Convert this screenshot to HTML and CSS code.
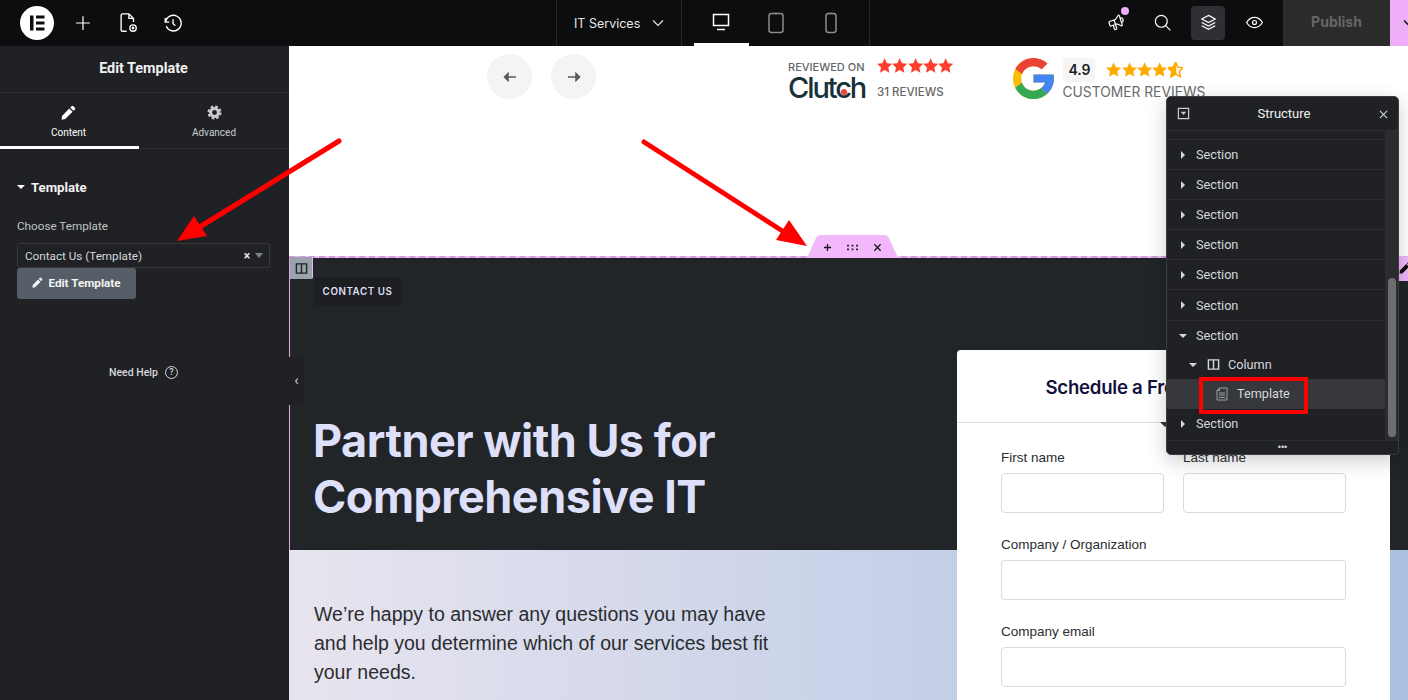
FILE: index.html
```html
<!DOCTYPE html>
<html lang="en">
<head>
<meta charset="utf-8">
<title>Edit Template</title>
<link rel="stylesheet" href="styles.css">
</head>
<body>
<svg class="defs" width="0" height="0">
  <defs>
    <symbol id="star" viewBox="1 1 22 22"><path d="M12 1.5l3.3 6.9 7.5 1-5.5 5.2 1.4 7.5L12 18.4l-6.7 3.7 1.4-7.5L1.200 9.400l7.500-1z"/></symbol>
    <symbol id="pencil" viewBox="0 0 16 16"><path d="M11.300 1.200a1.300 1.300 0 0 1 1.800 0l1.700 1.700a1.300 1.300 0 0 1 0 1.800l-1.500 1.500-3.500-3.500zM8.800 3.700l3.500 3.500-7.800 7.800L.6 15.600l.5-4z"/></symbol>
    <symbol id="columns" viewBox="0 0 14 14"><path d="M1.500 2h11v10h-11zM7 2v10" fill="none" stroke="currentColor" stroke-width="1.500"/></symbol>
  </defs>
</svg>

<header class="topbar">
  <div class="topbar-left">
    <svg class="logo" viewBox="0 0 34 34"><circle cx="17" cy="17" r="17" fill="#fff"/><path d="M10 9.500h3.500v15H10zM16 9.500h8.500v3H16zM16 15.500h8.500v3H16zM16 21.500h8.500v3H16z" fill="#0c0d0e"/></svg>
    <svg class="tool tool-plus" viewBox="0 0 24 24"><path d="M12 4.500v15M4.500 12h15"/></svg>
    <svg class="tool tool-doc" viewBox="0 0 24 24"><path d="M10.500 21H6a1.500 1.500 0 0 1-1.500-1.500v-16A1.500 1.500 0 0 1 6 2h7l5 5v4M13 2v5h5"/><circle cx="17.500" cy="17.500" r="3.500"/><circle cx="17.500" cy="17.500" r=".8"/></svg>
    <svg class="tool tool-history" viewBox="0 0 24 24"><path d="M12 8v4.500l2.500 2.500M4 11a8.500 8.500 0 1 1 .6 4.500M3.500 6.500V11H8"/></svg>
  </div>
  <div class="topbar-center">
    <div class="page-select"><span>IT Services</span><svg class="chev" viewBox="0 0 12 12"><path d="M1 3.500l5 5 5-5"/></svg></div>
    <div class="devices">
      <div class="device device-active"><svg viewBox="0 0 20 20"><path d="M2.500 2.500h15v11h-15zM6 17.500h8"/></svg></div>
      <div class="device"><svg viewBox="0 0 20 22"><rect x="3" y="1.500" width="14" height="19" rx="2.500"/><path d="M8.500 1.500h3"/></svg></div>
      <div class="device"><svg viewBox="0 0 20 22"><rect x="5" y="1.500" width="10" height="19" rx="2.500"/><path d="M8.500 1.500h3"/></svg></div>
    </div>
  </div>
  <div class="topbar-right">
    <div class="icon-btn icon-btn-notify"><svg viewBox="0 0 24 24"><g transform="rotate(-18 12 12)"><path d="M18 8a3 3 0 0 1 0 6M10 8v11a1 1 0 0 1-1 1H8a1 1 0 0 1-1-1v-5M12 8l4.500-3.800a.9.9 0 0 1 1.500.7v12.200a.9.9 0 0 1-1.500.7L12 14H4a1 1 0 0 1-1-1V9a1 1 0 0 1 1-1z"/></g></svg><i class="dot"></i></div>
    <div class="icon-btn"><svg viewBox="0 0 24 24"><circle cx="10.500" cy="10.500" r="7.500"/><path d="M16 16l6 6"/></svg></div>
    <div class="icon-btn icon-btn-active"><svg viewBox="0 0 24 24"><path d="M12 3l8.500 4.500L12 12 3.500 7.500zM3.500 12l8.500 4.500 8.500-4.500M3.500 16l8.500 4.500 8.500-4.500"/></svg></div>
    <div class="icon-btn"><svg viewBox="0 0 24 24"><path d="M2 12c2.600-4.300 6-6.500 10-6.500s7.400 2.200 10 6.500c-2.600 4.300-6 6.500-10 6.500S4.600 16.300 2 12z"/><circle cx="12" cy="12" r="2.500"/></svg></div>
    <div class="publish">Publish</div>
    <div class="publish-more"><svg viewBox="0 0 12 12"><path d="M1 3.500l5 5 5-5"/></svg></div>
  </div>
</header>

<div class="workspace">
  <aside class="sidebar">
    <div class="side-title">Edit Template</div>
    <div class="tabs">
      <div class="tab tab-active">
        <svg class="tab-icon"><use href="#pencil"/></svg>
        <span>Content</span>
      </div>
      <div class="tab">
        <svg class="tab-icon" viewBox="0 0 16 16"><circle cx="8" cy="8" r="4.200" fill="none" stroke="currentColor" stroke-width="3.200"/><circle cx="8" cy="8" r="6.300" fill="none" stroke="currentColor" stroke-width="2.400" stroke-dasharray="2.800 2.150"/></svg>
        <span>Advanced</span>
      </div>
    </div>
    <div class="side-body">
      <div class="side-heading"><i class="caret-down"></i><span>Template</span></div>
      <div class="side-label">Choose Template</div>
      <div class="select">
        <span class="select-value">Contact Us (Template)</span>
        <span class="select-clear">×</span>
        <i class="select-caret"></i>
      </div>
      <div class="edit-btn"><svg class="edit-pencil"><use href="#pencil"/></svg><span>Edit Template</span></div>
      <div class="need-help"><span>Need Help</span><span class="help-icon">?</span></div>
    </div>
  </aside>

  <main class="canvas">
    <section class="reviews">
      <div class="nav-arrows">
        <div class="nav-btn"><svg viewBox="0 0 14 10"><path d="M13 5H3M5 1.500L1.500 5 5 8.500z"/></svg></div>
        <div class="nav-btn"><svg viewBox="0 0 14 10"><path d="M1 5h10M9 1.500L12.500 5 9 8.500z"/></svg></div>
      </div>
      <div class="clutch">
        <div class="clutch-brand">
          <div class="clutch-on">REVIEWED ON</div>
          <div class="clutch-logo">Clutch<i class="clutch-dot"></i></div>
        </div>
        <div class="clutch-rating">
          <div class="stars stars-red">
            <svg><use href="#star"/></svg><svg><use href="#star"/></svg><svg><use href="#star"/></svg><svg><use href="#star"/></svg><svg><use href="#star"/></svg>
          </div>
          <div class="clutch-count">31 REVIEWS</div>
        </div>
      </div>
      <div class="google">
        <svg class="g-logo" viewBox="4 4 40 40">
          <path fill="#FBBC05" d="M43.611 20.083H42V20H24v8h11.303c-1.649 4.657-6.08 8-11.303 8-6.627 0-12-5.373-12-12s5.373-12 12-12c3.059 0 5.842 1.154 7.961 3.039l5.657-5.657C34.046 6.053 29.268 4 24 4 12.955 4 4 12.955 4 24s8.955 20 20 20 20-8.955 20-20c0-1.341-.138-2.650-.389-3.917z"/>
          <path fill="#EA4335" d="M6.306 14.691l6.571 4.819C14.655 15.108 18.961 12 24 12c3.059 0 5.842 1.154 7.961 3.039l5.657-5.657C34.046 6.053 29.268 4 24 4 16.318 4 9.656 8.337 6.306 14.691z"/>
          <path fill="#34A853" d="M24 44c5.166 0 9.860-1.977 13.409-5.192l-6.190-5.238C29.211 35.091 26.715 36 24 36c-5.202 0-9.619-3.317-11.283-7.946l-6.522 5.025C9.505 39.556 16.227 44 24 44z"/>
          <path fill="#4285F4" d="M43.611 20.083H42V20H24v8h11.303c-.792 2.237-2.231 4.166-4.087 5.571l6.193 5.236C36.971 39.205 44 34 44 24c0-1.341-.138-2.650-.389-3.917z"/>
        </svg>
        <div class="google-info">
          <div class="google-top">
            <span class="score">4.9</span>
            <div class="stars stars-orange">
              <svg><use href="#star"/></svg><svg><use href="#star"/></svg><svg><use href="#star"/></svg><svg><use href="#star"/></svg>
              <svg class="star-half" viewBox="1 1 22 22"><path d="M12 1.500l3.300 6.900 7.500 1-5.500 5.200 1.400 7.500L12 18.400l-6.700 3.700 1.400-7.500L1.200 9.400l7.500-1z" fill="none" stroke-width="2.200"/><path d="M12 1.500v16.900l-6.700 3.700 1.400-7.500L1.200 9.400l7.500-1z"/></svg>
            </div>
          </div>
          <div class="google-label">CUSTOMER REVIEWS</div>
        </div>
      </div>
    </section>

    <section class="contact-dark">
      <div class="add-handle">
        <svg viewBox="0 0 10 10"><path d="M5 1v8M1 5h8"/></svg>
        <svg class="handle-grid" viewBox="0 0 14 10"><path d="M1 2h2v2H1zM6 2h2v2H6zM11 2h2v2h-2zM1 6h2v2H1zM6 6h2v2H6zM11 6h2v2h-2z"/></svg>
        <svg viewBox="0 0 10 10"><path d="M1.500 1.500l7 7M8.500 1.500l-7 7"/></svg>
      </div>
      <div class="col-handle"><svg><use href="#columns"/></svg></div>
      <div class="edit-handle"><svg><use href="#pencil"/></svg></div>
      <div class="chip">CONTACT US</div>
      <h1 class="headline">Partner with Us for<br>Comprehensive IT</h1>
    </section>

    <section class="contact-light">
      <p class="lede">We’re happy to answer any questions you may have<br>and help you determine which of our services best fit<br>your needs.</p>
    </section>

    <div class="collapse-tab">‹</div>

    <form class="card">
      <div class="card-head">Schedule a Free Consultation<i class="card-notch"></i></div>
      <div class="card-form">
        <div class="field"><label>First name</label><div class="input"></div></div>
        <div class="field"><label>Last name</label><div class="input"></div></div>
        <div class="field field-wide"><label>Company / Organization</label><div class="input"></div></div>
        <div class="field field-wide"><label>Company email</label><div class="input"></div></div>
      </div>
    </form>
  </main>
</div>

<div class="structure">
  <div class="structure-head">
    <svg class="structure-toggle" viewBox="0 0 14 14"><path d="M1.500 1.500h11v11h-11z" fill="none" stroke="currentColor" stroke-width="1.300"/><path d="M4 5h6L7 8.500z"/></svg>
    <span>Structure</span>
    <svg class="structure-close" viewBox="0 0 10 10"><path d="M1 1l8 8M9 1l-8 8"/></svg>
  </div>
  <div class="structure-body">
    <div class="tree">
      <div class="tree-stub"></div>
      <div class="tree-row"><i class="caret-right"></i><span>Section</span></div>
      <div class="tree-row"><i class="caret-right"></i><span>Section</span></div>
      <div class="tree-row"><i class="caret-right"></i><span>Section</span></div>
      <div class="tree-row"><i class="caret-right"></i><span>Section</span></div>
      <div class="tree-row"><i class="caret-right"></i><span>Section</span></div>
      <div class="tree-row"><i class="caret-right"></i><span>Section</span></div>
      <div class="tree-row tree-open"><i class="caret-down"></i><span>Section</span></div>
      <div class="tree-row tree-col"><i class="caret-down"></i><svg class="tree-icon"><use href="#columns"/></svg><span>Column</span></div>
      <div class="tree-row tree-sel"><svg class="tree-doc" viewBox="0 0 12 14"><path d="M3.500 1H11v12H1V3.500zM3.500 1v2.500H1M3 6h6M3 8h6M3 10.500h6"/></svg><span>Template</span></div>
      <div class="tree-row tree-last"><i class="caret-right"></i><span>Section</span></div>
    </div>
    <div class="scroll"><div class="scroll-thumb"></div></div>
  </div>
  <div class="structure-foot">•••</div>
  <div class="redbox"></div>
</div>

<svg class="arrows" viewBox="0 0 1408 700">
  <path class="arrow-line" d="M339 141L198 228"/>
  <path class="arrow-head" d="M177 241l17-25 13 20z"/>
  <path class="arrow-line" d="M644 142L784 232"/>
  <path class="arrow-head" d="M807 246l-18-26-13 20z"/>
</svg>
</body>
</html>
```

FILE: styles.css
```css
* { box-sizing: border-box; }
html, body { margin: 0; height: 100%; }
body {
  width: 1408px;
  height: 700px;
  position: relative;
  overflow: hidden;
  display: flex;
  flex-direction: column;
  font-family: Roboto, "Liberation Sans", sans-serif;
  background: #fff;
}
.defs { position: absolute; }
i { display: block; font-style: normal; }

/* top bar */
.topbar {
  flex: 0 0 46px;
  height: 46px;
  display: flex;
  background: #0c0d0e;
  color: #fff;
}
.topbar svg { fill: none; stroke: currentColor; stroke-width: 1.500; }
.topbar-left {
  flex: 0 0 556px;
  display: flex;
  align-items: center;
  padding-left: 20px;
}
.topbar .logo { width: 34px; height: 34px; stroke: none; margin-right: 18px; }
.topbar .tool { width: 22px; height: 22px; margin-right: 23px; }
.topbar .tool-plus { stroke-width: 1.300; }
.topbar-center { flex: 0 0 314px; display: flex; }
.page-select {
  flex: 0 0 126px;
  display: flex;
  align-items: center;
  padding-left: 17px;
  gap: 12px;
  font-family: Inter, sans-serif;
  font-size: 12.500px;
  color: #e6e6e6;
  border-left: 1px solid #26282b;
  border-right: 1px solid #26282b;
}
.topbar .chev { width: 12px; height: 12px; stroke-width: 1.200; }
.devices { flex: 1; display: flex; padding-left: 12px; border-right: 1px solid #26282b; }
.device {
  width: 55px;
  height: 46px;
  display: flex;
  align-items: center;
  justify-content: center;
  color: #8c8c8c;
}
.device svg { width: 20px; height: 22px; margin-left: -2px; }
.device-active { color: #fff; border-bottom: 3px solid #fff; }
.topbar-right {
  flex: 1;
  min-width: 0;
  display: flex;
  align-items: center;
  padding-left: 229px;
}
.icon-btn {
  position: relative;
  flex: 0 0 34px;
  height: 34px;
  margin-right: 12px;
  display: flex;
  align-items: center;
  justify-content: center;
  border-radius: 4px;
  margin-top: -1px;
}
.icon-btn svg { width: 19px; height: 19px; }
.icon-btn-active { background: #2f3033; }
.dot {
  position: absolute;
  top: 1px;
  right: 4px;
  width: 8px;
  height: 8px;
  border-radius: 50%;
  background: #f0abfc;
}
.publish {
  flex: 0 0 107px;
  height: 46px;
  line-height: 44px;
  text-align: center;
  background: #2b2b2b;
  color: #666;
  font-family: Inter, sans-serif;
  font-size: 14px;
  font-weight: 700;
}
.publish-more {
  flex: 1;
  min-width: 0;
  height: 46px;
  background: #efaef8;
  color: #0c0d0e;
  display: flex;
  align-items: center;
  padding-left: 13px;
  overflow: hidden;
}
.publish-more svg { flex: 0 0 12px; width: 12px; height: 12px; }

/* workspace */
.workspace { flex: 1; display: flex; min-height: 0; }
.sidebar {
  flex: 0 0 289px;
  background: #1f2124;
  color: #fff;
}
.side-title {
  height: 47px;
  padding-right: 2px;
  line-height: 46px;
  text-align: center;
  font-size: 14.400px;
  font-weight: 700;
  color: #f1f1f1;
  border-bottom: 1px solid #2d2f33;
}
.tabs { display: flex; height: 56px; border-bottom: 1px solid #2d2f33; }
.tab {
  flex: 1;
  display: flex;
  flex-direction: column;
  align-items: center;
  padding-top: 12px;
  gap: 7px;
  font-size: 10px;
  color: #c9cbce;
}
.tab-active { flex: 0 0 139px; color: #fff; border-bottom: 3px solid #fff; height: 56px; padding-right: 2px; }
.tab-icon { width: 15px; height: 15px; fill: currentColor; }
.side-body { padding: 30px 19px 0 17px; position: relative; }
.side-heading {
  display: flex;
  align-items: center;
  gap: 6px;
  font-size: 13.200px;
  font-weight: 700;
  color: #f4f4f4;
  height: 16px;
}
.caret-down { width: 0; height: 0; border: 4px solid transparent; border-top: 4px solid #fff; border-bottom: 0; }
.caret-right { width: 0; height: 0; border: 4px solid transparent; border-left: 4px solid #d5d8dc; border-right: 0; }
.side-label {
  margin-top: 23px;
  font-size: 11.700px;
  line-height: 16px;
  color: #c0c3c7;
}
.select {
  margin-top: 9px;
  height: 25px;
  display: flex;
  align-items: center;
  padding: 0 6px 0 7px;
  border: 1px solid #36383c;
  border-radius: 3px;
  font-size: 11.700px;
  color: #d5d8dc;
}
.select-value { flex: 1; }
.select-clear { font-weight: 700; font-size: 12px; margin-right: 5px; color: #e6e8ea; }
.select-caret { width: 0; height: 0; border: 4px solid transparent; border-top: 5px solid #7d8085; border-bottom: 0; }
.edit-btn {
  width: 119px;
  height: 31px;
  padding-bottom: 2px;
  display: flex;
  align-items: center;
  justify-content: center;
  gap: 5px;
  background: #555d66;
  border-radius: 3px;
  font-size: 11.700px;
  font-weight: 700;
  color: #f4f4f4;
}
.edit-pencil { width: 11px; height: 11px; fill: currentColor; }
.need-help {
  margin-top: 67px;
  margin-left: 75px;
  width: 90px;
  display: flex;
  align-items: center;
  justify-content: space-between;
  font-size: 10.500px;
  font-weight: 500;
  color: #d5d8dc;
  padding-left: 17px;
}
.help-icon {
  width: 13px;
  height: 13px;
  margin-right: 4px;
  border: 1px solid #d5d8dc;
  border-radius: 50%;
  font-size: 9px;
  line-height: 11px;
  text-align: center;
}

/* canvas */
.canvas { flex: 1; min-width: 0; position: relative; display: flex; flex-direction: column; }
.reviews {
  flex: 0 0 210px;
  display: flex;
  align-items: flex-start;
  padding: 8px 0 0 198px;
  background: #fff;
}
.nav-arrows { display: flex; gap: 19px; }
.nav-btn {
  width: 45px;
  height: 45px;
  border-radius: 50%;
  background: #f4f4f4;
  display: flex;
  align-items: center;
  justify-content: center;
}
.nav-btn svg { width: 14px; height: 10px; fill: #58595b; stroke: #58595b; stroke-width: 1.500; }
.clutch { display: flex; gap: 13px; margin-left: 192px; padding-top: 6px; }
.clutch-brand { width: 76px; }
.clutch-on {
  font-family: Inter, sans-serif;
  font-size: 11px;
  font-weight: 500;
  line-height: 14px;
  color: #666;
  white-space: nowrap;
}
.clutch-logo {
  position: relative;
  font-family: Inter, sans-serif;
  font-size: 29px;
  font-weight: 500;
  line-height: 28px;
  letter-spacing: -2.100px;
  color: #17313b;
  white-space: nowrap;
}
.clutch-dot {
  position: absolute;
  left: 53px;
  top: 15px;
  width: 6px;
  height: 6px;
  border-radius: 50%;
  background: #ef4335;
}
.stars { display: flex; }
.stars svg { width: 15.300px; height: 15.300px; }
.stars-red { fill: #ff3d2e; margin-top: -2px; }
.stars-orange { fill: #ffab00; stroke: #ffab00; stroke-width: 0; }
.star-half { stroke-width: 2; }
.clutch-count {
  margin-top: 12px;
  font-family: Inter, sans-serif;
  font-size: 11.500px;
  font-weight: 500;
  color: #666;
  white-space: nowrap;
}
.google { display: flex; margin-left: 60px; padding-top: 4px; gap: 9px; }
.g-logo { width: 41px; height: 41px; flex: none; }
.google-info { display: flex; flex-direction: column; }
.google-top { display: flex; align-items: center; gap: 11px; }
.score {
  width: 32px;
  height: 24px;
  line-height: 24px;
  text-align: center;
  background: #f5f5f5;
  border-radius: 4px;
  font-family: Inter, sans-serif;
  font-size: 14px;
  font-weight: 600;
  color: #1d1d1f;
}
.google-label {
  margin: 1px 0 0 -1px;
  font-family: Inter, sans-serif;
  font-size: 13.800px;
  line-height: 18px;
  color: #6a6a6a;
  white-space: nowrap;
}

.contact-dark {
  flex: 0 0 294px;
  position: relative;
  background: linear-gradient(#212528, #212528) padding-box, linear-gradient(#f0bdf8, #f0bdf8) border-box;
  border-top: 2px dashed #cf9dd8;
  border-left: 1px solid #d9a8e0;
  padding: 19px 0 0 24px;
}
.add-handle {
  position: absolute;
  left: 517px;
  top: -23px;
  width: 91px;
  height: 23px;
  display: flex;
  align-items: center;
  justify-content: center;
  gap: 14px;
  padding: 2px 0 0;
  background: #f2b8fb;
  clip-path: path("M0 23 L9 3 Q10.500 0 14 0 H77 Q80.500 0 82 3 L91 23 Z");
}
.add-handle svg { width: 9px; height: 9px; fill: none; stroke: #1a1a1a; stroke-width: 1.500; }
.add-handle .handle-grid { width: 13px; fill: #1a1a1a; stroke: none; }
.col-handle {
  position: absolute;
  left: 0;
  top: -1px;
  width: 23px;
  height: 22px;
  background: #9aa2ab;
  border-right: 1px solid #eab3f2;
  border-bottom-right-radius: 2px;
  display: flex;
  align-items: center;
  justify-content: center;
  color: #1f2124;
}
.col-handle svg { width: 13px; height: 13px; }
.edit-handle {
  position: absolute;
  right: 0;
  top: -2px;
  width: 9px;
  height: 25px;
  overflow: hidden;
  background: #f0b6f9;
  fill: #111;
  padding-top: 5px;
}
.edit-handle svg { width: 13px; height: 13px; display: block; }
.chip {
  width: 87px;
  height: 29px;
  line-height: 30px;
  text-align: center;
  background: #1c1e21;
  border-radius: 4px;
  font-family: Inter, sans-serif;
  font-size: 9.800px;
  font-weight: 600;
  letter-spacing: .55px;
  color: #dedff8;
}
.headline {
  margin: 107px 0 0 -1px;
  font-family: Inter, sans-serif;
  font-size: 45px;
  line-height: 56px;
  font-weight: 700;
  letter-spacing: -.5px;
  color: #dedff8;
}
.contact-light {
  flex: 1;
  padding: 50px 0 0 25px;
  background: linear-gradient(90deg, #e8e4ef 0%, #aac1e2 100%);
}
.lede {
  margin: 0;
  font-family: "Liberation Sans", sans-serif;
  font-size: 19.500px;
  line-height: 29px;
  color: #2a2d30;
}
.collapse-tab {
  position: absolute;
  left: 0;
  top: 311px;
  width: 15px;
  height: 48px;
  line-height: 46px;
  text-align: center;
  background: #1f2124;
  color: #c9cbce;
  font-size: 15px;
}

/* form card */
.card {
  position: absolute;
  left: 668px;
  top: 304px;
  width: 433px;
  height: 350px;
  overflow: hidden;
  background: #fff;
  border-radius: 4px 4px 0 0;
}
.card-head {
  position: relative;
  height: 73px;
  line-height: 75px;
  text-align: center;
  font-family: Inter, sans-serif;
  font-size: 18.600px;
  font-weight: 600;
  letter-spacing: -.25px;
  white-space: nowrap;
  color: #11123d;
  border-bottom: 1px solid #dcdcdc;
}
.card-notch {
  position: absolute;
  left: 203px;
  bottom: -5px;
  width: 0;
  height: 0;
  border: 5px solid transparent;
  border-top: 5px solid #333;
  border-bottom: 0;
}
.card-form {
  display: grid;
  grid-template-columns: 163px 163px;
  gap: 24px 19px;
  padding: 27px 44px 0;
}
.field { font-family: "Liberation Sans", sans-serif; }
.field-wide { grid-column: 1 / -1; }
.field label {
  display: block;
  height: 16px;
  font-size: 13.500px;
  line-height: 16px;
  color: #2a2d30;
  margin-bottom: 7px;
}
.input {
  height: 40px;
  border: 1px solid #d9dadb;
  border-radius: 4px;
  background: #fff;
}

/* structure panel */
.structure {
  position: absolute;
  left: 1166px;
  top: 96px;
  width: 233px;
  height: 359px;
  display: flex;
  flex-direction: column;
  background: #1f2124;
  border-radius: 5px;
  border: 1px solid #3a3c40;
  box-shadow: 0 6px 20px rgba(0, 0, 0, .2);
  color: #d5d8dc;
}
.structure-head {
  flex: 0 0 34px;
  display: flex;
  align-items: center;
  justify-content: center;
  position: relative;
  padding-left: 3px;
  font-size: 13px;
  color: #f1f1f1;
  border-bottom: 1px solid #2d2f33;
}
.structure-toggle { position: absolute; left: 10px; top: 10px; width: 13px; height: 13px; fill: currentColor; color: #c9cbce; }
.structure-close { position: absolute; right: 10px; top: 13px; width: 9px; height: 9px; stroke: #d5d8dc; stroke-width: 1.200; fill: none; }
.structure-body { flex: 1; display: flex; min-height: 0; }
.tree { flex: 1; font-size: 12.700px; }
.tree-stub { height: 9px; border-bottom: 1px solid #2d2f33; }
.tree-row {
  height: 30.100px;
  display: flex;
  align-items: center;
  padding-left: 14px;
  gap: 11px;
  border-bottom: 1px solid #2d2f33;
}
.tree-row .caret-down { border-top-color: #d5d8dc; margin: 0 -2px; }
.tree-open { border-bottom: 0; height: 30px; }
.tree-col { padding-left: 24px; height: 28px; gap: 11px; border-bottom: 0; }
.tree-col .caret-down { margin-right: -1px; }
.tree-col span { margin-left: -3px; }
.tree-icon { width: 13px; height: 13px; color: #d5d8dc; }
.tree-sel {
  height: 30px;
  padding-left: 49px;
  gap: 9px;
  background: #36383c;
  border-bottom: 0;
}
.tree-doc { width: 12px; height: 14px; fill: none; stroke: #a8abaf; stroke-width: .9; }
.tree-last { border-bottom: 0; }
.scroll { flex: 0 0 13px; background: #2a2c2f; padding: 147px 2px 0 3px; }
.scroll-thumb { height: 159px; background: #6d6e70; border-radius: 4px; }
.structure-foot {
  flex: 0 0 14px;
  text-align: center;
  font-family: "Liberation Sans", sans-serif;
  font-size: 9px;
  line-height: 13px;
  letter-spacing: 0;
  color: #d5d8dc;
  border-top: 1px solid #2d2f33;
}
.redbox {
  position: absolute;
  left: 32px;
  top: 280px;
  width: 109px;
  height: 37px;
  border: 4px solid #f00;
}

/* annotations */
.arrows {
  position: absolute;
  left: 0;
  top: 0;
  width: 1408px;
  height: 700px;
  pointer-events: none;
}
.arrow-line { fill: none; stroke: #f00; stroke-width: 5; stroke-linecap: round; }
.arrow-head { fill: #f00; }
```
